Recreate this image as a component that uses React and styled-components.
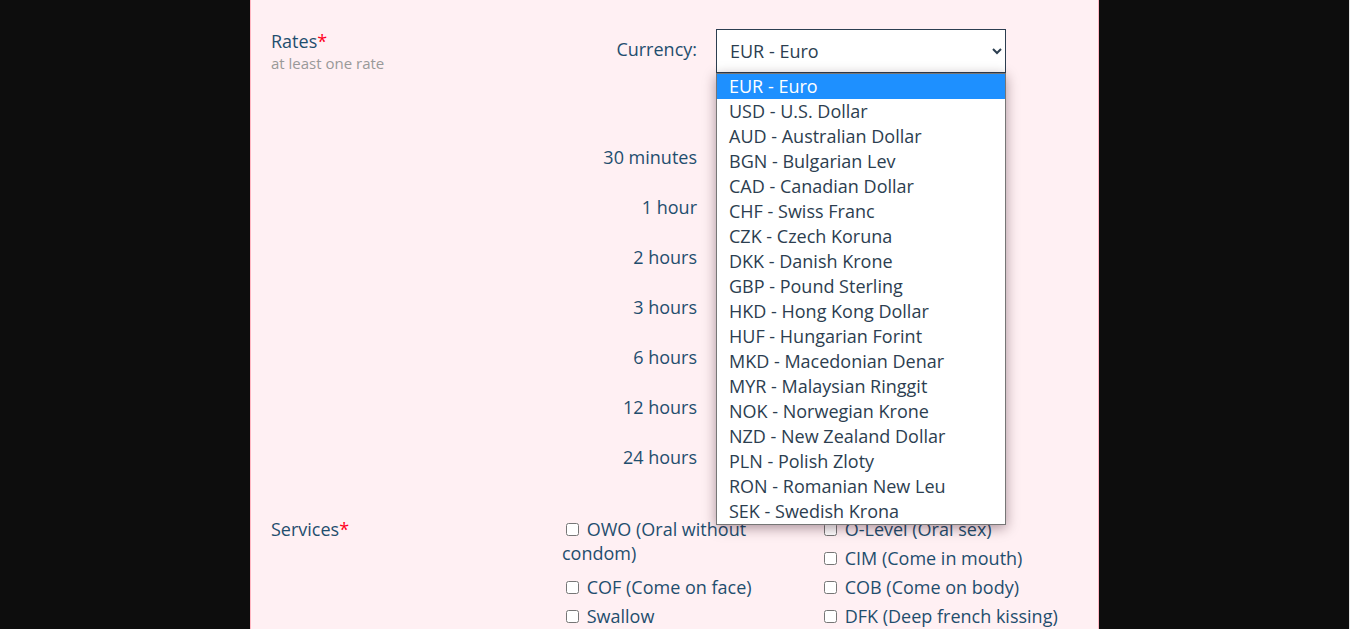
import React, { useState } from "react";
import styled, { createGlobalStyle } from "styled-components";

const GlobalStyle = createGlobalStyle`
  *, *::before, *::after { box-sizing: border-box; }
  body {
    margin: 0;
    background: #0d0d0d;
    color: #1f4e6e;
    font: 18px/24px "Open Sans", "Noto Sans", sans-serif;
  }
`;

const Page = styled.div`
  display: flex;
  justify-content: center;
  min-height: 100vh;
  border-right: 1px solid #e6e6e6;
`;

const Panel = styled.form`
  width: 100%;
  max-width: 849px;
  padding: 29px 20px 0;
  background: #fff0f3;
  border: solid #ffb6c1;
  border-width: 0 1px;
`;

const Section = styled.section`
  display: grid;
  grid-template-columns: 291px minmax(0, 1fr);

  & + & {
    margin-top: 48px;
  }
`;

const Heading = styled.div`
  font-size: 18px;
`;

const Required = styled.span`
  color: #ff0022;
`;

const Hint = styled.div`
  color: #999;
  font-size: 15px;
  line-height: 20px;
`;

const Field = styled.div`
  display: flex;
  align-items: flex-start;
  gap: 19px;
  margin-bottom: 72px;
`;

const FieldLabel = styled.label`
  width: 135px;
  padding-top: 8px;
  text-align: right;
`;

const Picker = styled.div`
  position: relative;
  width: 290px;
`;

const Select = styled.select`
  display: block;
  width: 100%;
  height: 44px;
  padding: 0 1px 0 9px;
  border: 1px solid #2c3e50;
  border-radius: 0;
  background: #fff;
  color: #2c3e50;
  font: inherit;
`;

const Menu = styled.ul`
  position: absolute;
  z-index: 1;
  top: 100%;
  left: 0;
  right: 0;
  margin: 0;
  padding: 0;
  list-style: none;
  border: 1px solid #767676;
  background: #fff;
  box-shadow: 0 3px 12px rgba(40, 0, 20, 0.4);
`;

const Option = styled.li`
  padding: 0 12px;
  line-height: 25px;
  color: ${(p) => (p["aria-selected"] ? "#fff" : "#2c3e50")};
  background: ${(p) => (p["aria-selected"] ? "#1e90ff" : "transparent")};
`;

const Durations = styled.ul`
  display: flex;
  flex-direction: column;
  gap: 26px;
  width: 135px;
  margin: 0;
  padding: 0;
  list-style: none;
  text-align: right;
`;

const Services = styled.div`
  display: grid;
  grid-template-columns: 1fr 1fr;
  grid-auto-flow: dense;
  row-gap: 5px;
`;

const Service = styled.label`
  grid-column: ${(p) => p.$column};
  grid-row: span ${(p) => p.$rows || 1};
`;

const currencies = [
  "EUR - Euro",
  "USD - U.S. Dollar",
  "AUD - Australian Dollar",
  "BGN - Bulgarian Lev",
  "CAD - Canadian Dollar",
  "CHF - Swiss Franc",
  "CZK - Czech Koruna",
  "DKK - Danish Krone",
  "GBP - Pound Sterling",
  "HKD - Hong Kong Dollar",
  "HUF - Hungarian Forint",
  "MKD - Macedonian Denar",
  "MYR - Malaysian Ringgit",
  "NOK - Norwegian Krone",
  "NZD - New Zealand Dollar",
  "PLN - Polish Zloty",
  "RON - Romanian New Leu",
  "SEK - Swedish Krona",
];

const durations = ["30 minutes", "1 hour", "2 hours", "3 hours", "6 hours", "12 hours", "24 hours"];

const services = [
  { name: "OWO (Oral without condom)", column: 1, rows: 2 },
  { name: "O-Level (Oral sex)", column: 2 },
  { name: "CIM (Come in mouth)", column: 2 },
  { name: "COF (Come on face)", column: 1 },
  { name: "COB (Come on body)", column: 2 },
  { name: "Swallow", column: 1 },
  { name: "DFK (Deep french kissing)", column: 2 },
];

export default function App() {
  const [currency, setCurrency] = useState(currencies[0]);
  return (
    <Page>
      <GlobalStyle />
      <Panel>
        <Section>
          <div>
            <Heading>Rates<Required>*</Required></Heading>
            <Hint>at least one rate</Hint>
          </div>
          <div>
            <Field>
              <FieldLabel htmlFor="currency">Currency:</FieldLabel>
              <Picker>
                <Select id="currency" value={currency} onChange={(e) => setCurrency(e.target.value)}>
                  {currencies.map((c) => <option key={c}>{c}</option>)}
                </Select>
                <Menu role="listbox" aria-label="Currency">
                  {currencies.map((c) => (
                    <Option key={c} role="option" aria-selected={c === currency} onClick={() => setCurrency(c)}>
                      {c}
                    </Option>
                  ))}
                </Menu>
              </Picker>
            </Field>
            <Durations>
              {durations.map((d) => <li key={d}>{d}</li>)}
            </Durations>
          </div>
        </Section>
        <Section>
          <Heading>Services<Required>*</Required></Heading>
          <Services>
            {services.map((s) => (
              <Service key={s.name} $column={s.column} $rows={s.rows}>
                <input type="checkbox" /> {s.name}
              </Service>
            ))}
          </Services>
        </Section>
      </Panel>
    </Page>
  );
}
